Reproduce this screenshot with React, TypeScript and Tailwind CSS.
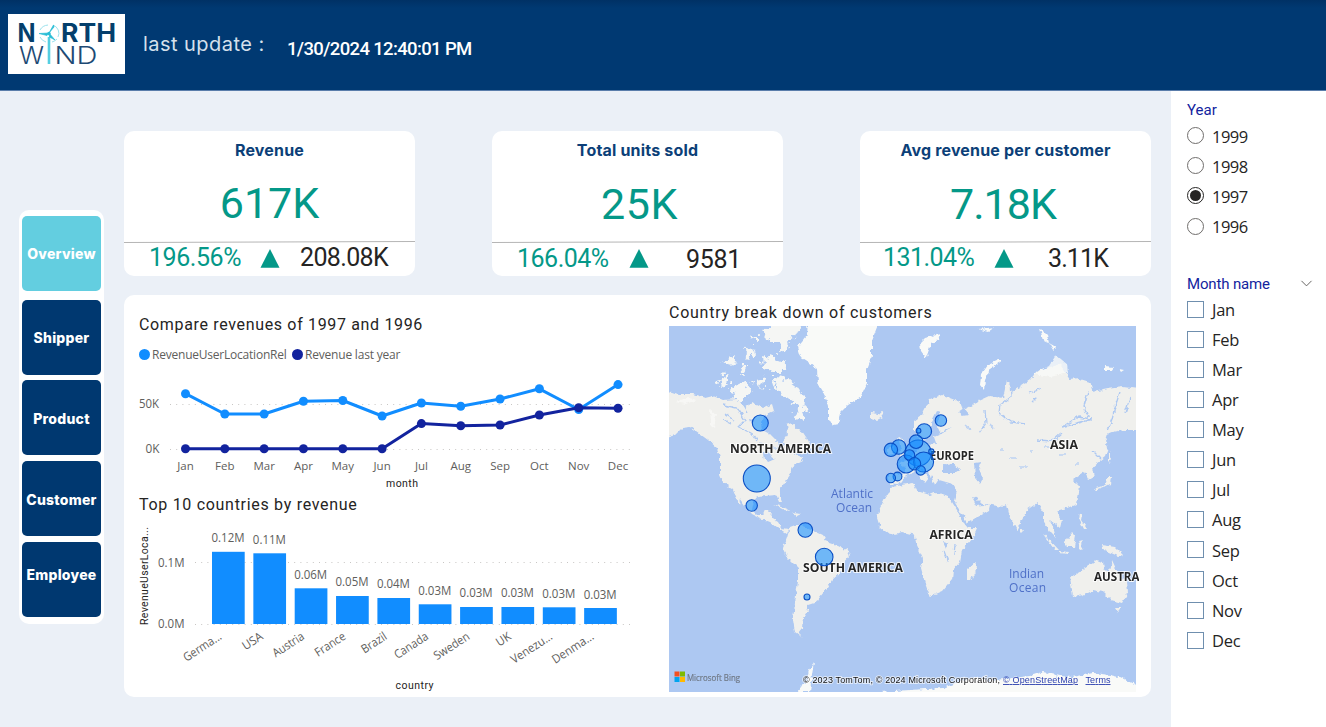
import React from "react";
import { ChevronDown } from "lucide-react";

const months = ["Jan", "Feb", "Mar", "Apr", "May", "Jun", "Jul", "Aug", "Sep", "Oct", "Nov", "Dec"];
const current = [393.7, 414, 414, 401.2, 400.5, 416, 403, 406.2, 399, 388.8, 409.5, 384.6];
const previous = [448.7, 448.7, 448.7, 448.7, 448.7, 448.7, 423.6, 425.8, 425, 415, 407.8, 408.3];
const monthX = (i: number) => 185.5 + i * 39.32;

const bars = [
  { name: "Germa...", value: "0.12M", top: 551.8, w: 43 },
  { name: "USA", value: "0.11M", top: 553.3, w: 22 },
  { name: "Austria", value: "0.06M", top: 588.3, w: 35 },
  { name: "France", value: "0.05M", top: 596, w: 34 },
  { name: "Brazil", value: "0.04M", top: 598, w: 28 },
  { name: "Canada", value: "0.03M", top: 604.3, w: 38 },
  { name: "Sweden", value: "0.03M", top: 607, w: 40 },
  { name: "UK", value: "0.03M", top: 607, w: 15 },
  { name: "Venezu...", value: "0.03M", top: 607.3, w: 47 },
  { name: "Denma...", value: "0.03M", top: 608, w: 47 },
];
const barLabelY = [542, 544, 579, 586, 588, 595, 597, 597, 598, 599];

const bubbles = [
  [760.3, 423, 8], [756.8, 478.5, 13.5], [751.7, 505.5, 5.7], [805.3, 530, 7.3], [824.2, 557, 8.8], [807, 597, 3],
  [940.9, 420.5, 5.7], [924.2, 431.2, 7.4], [918.5, 430.7, 2.4], [918.2, 453, 13], [916.1, 441.7, 6.8],
  [898.7, 447, 7.2], [890.9, 449.8, 6.7], [931.3, 451.5, 2.6], [906.2, 464, 9], [923.6, 462, 10],
  [909.4, 455, 5.3], [914.5, 463.7, 6.2], [920.7, 470.4, 4.7], [897.5, 476.5, 4.4], [890.8, 478, 4.7],
];

function Logo() {
  return (
    <svg width="117" height="60" viewBox="0 0 117 60" className="shrink-0 bg-white">
      <g fontFamily="Inter, sans-serif" fill="#043f6c">
        <text x="9.500" y="28" fontSize="25" fontWeight="700" textLength="18" lengthAdjust="spacingAndGlyphs">N</text>
        <text x="53" y="28" fontSize="25" fontWeight="700" textLength="55" lengthAdjust="spacingAndGlyphs">RTH</text>
        <g fontWeight="300" fontSize="24.500" fill="#1d4a74">
          <text x="11" y="49.500" textLength="25" lengthAdjust="spacingAndGlyphs">W</text>
          <text x="46.500" y="49.500" textLength="43" lengthAdjust="spacingAndGlyphs">ND</text>
        </g>
      </g>
      <path d="M41 23v27" stroke="#55cfe2" strokeWidth="2.600" />
      <path d="M40 11a10 9 0 0 0-8 5M32 23a10 9 0 0 0 6 5M45 11a10 9 0 0 1 5 12M49 25a10 9 0 0 1-5 3" fill="none" stroke="#9be2ed" strokeWidth="1" />
      <path d="M41 19l4.500-8 .5 2zM41 19l-10 .5 8 2zM41 19l6 7-5.500-3z" fill="#28bdd6" stroke="#28bdd6" strokeWidth=".7" />
      <circle cx="41" cy="19.500" r="1.700" fill="#28bdd6" />
    </svg>
  );
}

interface KpiProps {
  title: string;
  value: string;
  percent: string;
  prior: string;
  tone: string;
  pctBox: string;
  priorBox: string;
}

function Kpi({ title, value, percent, prior, tone, pctBox, priorBox }: KpiProps) {
  return (
    <section className="flex h-[145px] w-[291px] flex-col rounded-[10px] bg-white">
      <h2 className="h-[38px] pt-[7px] text-center [font-family:Inter,sans-serif] text-[16px] leading-[24px] font-bold tracking-[0.180px] text-[#0c3f78]">{title}</h2>
      <div className={"h-[72px] text-center [font-family:Roboto,sans-serif] text-[43px] leading-[68px] text-[#049888] " + tone}>{value}</div>
      <svg className="block h-[3px] w-full shrink-0" viewBox="0 0 291 3" preserveAspectRatio="none">
        <path d="M0 1.500L291 .5" stroke="#b5b5b5" strokeWidth="1" />
      </svg>
      <div className="flex h-[32px] [font-family:Roboto,sans-serif] text-[25px] leading-[28px]">
        <div className={"text-[#049888] " + pctBox}>{percent}</div>
        <svg className="mt-[5px] h-[19px] w-[20px]" viewBox="0 0 20 19">
          <path d="M10 0L19.500 18.700H.5z" fill="#049888" />
        </svg>
        <div className={"text-[#252423] " + priorBox}>{prior}</div>
      </div>
    </section>
  );
}

function LineChart() {
  const line = (ys: number[]) => ys.map((y, i) => `${monthX(i)},${y}`).join(" ");
  return (
    <svg width="535" height="126" viewBox="124 366 535 126" className="block" fontFamily="'Open Sans', 'Noto Sans', sans-serif" fontSize="12" fill="#605e5c">
      <path d="M170 404.500H632M170 449.500H632" stroke="#c8c6c4" strokeWidth="1" strokeDasharray="1 5.200" />
      <text x="139" y="408" textLength="20" lengthAdjust="spacingAndGlyphs">50K</text>
      <text x="145.500" y="453" textLength="14" lengthAdjust="spacingAndGlyphs">0K</text>
      <polyline points={line(current)} fill="none" stroke="#118dff" strokeWidth="3" strokeLinejoin="round" />
      {current.map((y, i) => <circle key={i} cx={monthX(i)} cy={y} r="4.500" fill="#118dff" />)}
      <polyline points={line(previous)} fill="none" stroke="#12239e" strokeWidth="3" strokeLinejoin="round" />
      {previous.map((y, i) => <circle key={i} cx={monthX(i)} cy={y} r="4.500" fill="#12239e" />)}
      {months.map((m, i) => <text key={m} x={monthX(i)} y="470" textAnchor="middle" fontSize="11.500">{m}</text>)}
      <text x="386" y="487" textLength="32" fontFamily="Roboto, sans-serif" fontSize="10.500" fill="#252423">month</text>
    </svg>
  );
}

function BarChart() {
  return (
    <svg width="535" height="178" viewBox="124 519 535 178" className="block" fontFamily="'Open Sans', 'Noto Sans', sans-serif" fontSize="12" fill="#605e5c">
      <path d="M195 562.500H632M195 624.500H632" stroke="#c8c6c4" strokeWidth="1" strokeDasharray="1 5.200" />
      <text x="158" y="567" textLength="26.500" lengthAdjust="spacingAndGlyphs">0.1M</text>
      <text x="158" y="628" textLength="26.500" lengthAdjust="spacingAndGlyphs">0.0M</text>
      <text transform="translate(148 625) rotate(-90)" textLength="98" fontFamily="Roboto, sans-serif" fontSize="10.500" fill="#252423">RevenueUserLoca...</text>
      {bars.map((b, i) => {
        const x = 212 + i * 41.35;
        return (
          <g key={b.name}>
            <rect x={x} y={b.top} width="32.700" height={624 - b.top} fill="#118dff" />
            <text x={x - 0.5} y={barLabelY[i]} textLength="33" lengthAdjust="spacingAndGlyphs">{b.value}</text>
            <text transform={`translate(${x + 10.5} ${638.5}) rotate(-33)`} textAnchor="end" textLength={b.w} lengthAdjust="spacingAndGlyphs">{b.name}</text>
          </g>
        );
      })}
      <text x="395.500" y="689" textLength="38" fontFamily="Roboto, sans-serif" fontSize="10.500" fill="#252423">country</text>
    </svg>
  );
}

function WorldMap() {
  return (
    <svg width="470" height="366" viewBox="669 326 470 366" className="block">
      <defs>
        <clipPath id="frame">
          <rect x="669" y="326" width="467" height="366" />
        </clipPath>
        <filter id="coast" x="-5%" y="-5%" width="110%" height="110%">
          <feTurbulence type="fractalNoise" baseFrequency="0.22" numOctaves="2" seed="4" />
          <feDisplacementMap in="SourceGraphic" scale="5" xChannelSelector="R" yChannelSelector="G" />
        </filter>
        <filter id="isles" x="-10%" y="-10%" width="120%" height="120%">
          <feTurbulence type="fractalNoise" baseFrequency="0.16" numOctaves="3" seed="9" />
          <feDisplacementMap in="SourceGraphic" scale="14" xChannelSelector="R" yChannelSelector="G" />
        </filter>
      </defs>
      <g clipPath="url(#frame)">
        <rect x="669" y="326" width="467" height="366" fill="#adc8f2" />
        <g filter="url(#coast)">
          <g fill="#f0f0ed">
            <path d="M660 389L669 391 678 394 693 394 705 398 713 396 723 400 737 399 745 407 753 403 763 408 772 404 774 411 765 415 761 422 762 430 770 434 776 440 780 449 784 446 783 441 788 434 787 425 793 423 797 430 802 431 808 440 812 448 805 453 793 454 803 458 801 462 793 466 790 475 783 485 778 492 782 502 779 502 776 495 765 496 755 498 753 505 752 510 757 515 763 515 765 510 772 511 771 518 778 522 782 529 788 530 787 533 777 527 770 522 760 518 752 514 745 506 739 498 741 506 737 500 733 490 723 482 720 475 720 457 717 448 708 440 697 432 690 427 682 428 675 435 660 440z" />
            <path d="M790 527L798 524 812 530 823 535 828 543 838 546 848 551 850 555 843 563 840 573 832 580 827 588 820 597 817 602 808 605 808 610 803 618 802 628 798 633 803 638 795 632 793 620 795 603 798 580 798 568 788 558 783 548 787 538z" />
            <path d="M892 487L913 483 917 491 930 495 937 492 948 496 952 502 957 510 963 522 968 528 977 528 973 537 962 550 960 562 953 570 952 580 942 592 930 597 925 583 921 568 923 558 916 543 915 535 903 532 890 535 880 527 877 518 880 508 885 498z" />
            <path d="M888 473L890 484 898 485 903 478 910 473 917 472 925 483 929 478 921 469 931 475 935 486 939 480 953 484 957 490 954 501 960 511 967 523 989 510 990 506 982 505 977 506 972 497 976 498 982 504 992 505 1003 507 1007 504 1010 517 1017 531 1022 520 1027 510 1037 503 1043 512 1043 520 1050 532 1056 538 1053 527 1050 520 1060 528 1062 520 1056 511 1067 508 1077 504 1080 487 1073 480 1085 472 1089 480 1094 477 1092 467 1105 457 1108 448 1105 442 1108 433 1123 430 1146 430 1146 390 1123 387 1108 389 1093 392 1090 382 1080 379 1070 380 1060 364 1050 367 1037 371 1030 380 1012 392 1007 380 1003 398 990 396 979 401 963 410 960 402 942 395 930 399 922 415 914 421 914 433 921 441 923 443 914 454 899 464 906 468 904 474z" />
            <path d="M898 436L903 440 907 455 899 458 901 450zM887 448L894 446 893 454 887 455z" />
            <path d="M871 413L878 414 882 412 883 417 877 420 871 418z" />
            <path d="M975 562L977 567 971 580 967 580 967 569zM1043 534L1048 538 1059 550 1055 550zM1059 551L1069 552 1068 554 1059 553zM1064 542L1072 532 1076 536 1074 547 1067 547zM1078 541L1084 540 1081 544 1084 549 1080 550zM1102 545L1115 547 1123 555 1118 556 1104 550zM1079 513L1082 515 1081 520 1087 529 1083 529 1078 519z" />
            <path d="M1070 577L1082 570 1090 565 1098 560 1103 562 1104 569 1109 572 1112 560 1118 573 1127 582 1128 592 1122 603 1111 600 1103 592 1093 590 1083 595 1073 597zM1115 608L1120 608 1118 613z" />
            <path d="M1111 477L1110 484 1103 488 1095 491 1096 488 1105 485 1108 477zM1109 450L1112 459 1109 463zM1021 528L1023 531 1021 533z" />
            <path d="M773 504L785 508 792 511 784 510zM792 513L801 514 797 516z" />
          </g>
          <g fill="#f9faf8">
            <path d="M808 322L807 335 797 347 800 357 808 362 817 370 818 383 825 395 828 405 828 417 833 426 838 425 840 413 848 405 860 398 867 383 867 370 872 357 872 340 879 322z" />
            <path d="M920 343L925 338 940 334 938 340 931 344 926 358 921 351zM1003 360L990 369 985 379 984 390 980 385 981 375 988 365 999 360zM1040 328L1047 335 1049 343 1043 340zM1049 343L1056 347 1053 350zM1105 366L1114 367 1111 371 1105 371zM1119 369L1124 370 1121 372zM978 329L995 327 988 332z" />
            <path d="M1056 355L1067 364 1068 373 1050 377 1033 374 1049 366z" opacity=".8" />
            <path d="M798 692L800 686 806 683 809 670 814 662 812 675 810 692zM880 692L910 690 943 688 962 681 977 677 988 681 1003 679 1030 676 1043 672 1060 676 1073 677 1093 673 1110 675 1123 678 1146 690 1146 700 880 700z" />
            <path d="M676 402L688 397 696 400 686 404zM710 410L716 415 714 430 711 423z" opacity=".7" />
          </g>
          <g fill="#adc8f2">
            <path d="M937 411L940 412 936 424 940 432 952 428 941 434 934 437 936 443 927 444 922 442 931 435 931 423z" />
            <path d="M944 464L950 465 953 462 960 470 955 473 944 473zM974 463L981 462 979 469 983 478 980 484 975 478zM964 408L969 414 962 415 958 412zM943 542L948 543 946 549z" />
            <path d="M749 418L753 419 751 424zM740 412L744 413 742 416zM763 453L772 452 770 457 776 459 769 462 764 460z" />
          </g>
          <g fill="none" stroke="#adc8f2" strokeWidth="1.300">
            <path d="M1010 383L1011 397 1000 405 999 413 1010 422 1025 424M1088 392L1084 406 1089 420 1062 427M1062 427L1078 417 1092 419M1120 392L1115 407 1112 420 1108 430M1130 398L1125 414M1037 440L1053 441 1062 433M1092 450L1101 459M985 410L986 423 979 433M1030 393L1041 389M1032 402L1037 397" />
            <path d="M723 405L737 408 745 420 738 427 751 433 757 442M725 414L735 421M955 545L954 554M944 551L948 562M724 420L732 424M742 402L748 412" />
          </g>
          <path d="M1000 450h3M1010 458h7M1030 451h3M1045 447h8M1060 455h6M1020 467h7M990 424l4 5M965 425l5 4M1075 464h4M773 448h8M760 442l6 2" stroke="#bdd2f2" strokeWidth="1.500" />
        </g>
        <g filter="url(#isles)" fill="#f5f6f4">
          <path d="M763 329L772 322 805 322 800 332 791 337 786 350 779 351 781 341 772 341 766 338z" />
          <path d="M719 377L728 374 730 382 723 389 718 383zM732 386L745 383 751 390 749 399 739 399 731 393zM723 362L734 355 737 362 727 365zM743 349L753 347 758 353 750 357zM762 356L775 358 785 362 783 372 770 372 763 367zM758 379L766 377 763 387zM775 377L786 378 796 387 803 397 807 410 801 420 793 415 799 407 788 397 779 391 773 388zM741 366L749 366 746 371 740 370zM751 338L757 336 757 342zM750 382L755 381 754 388zM739 374l6-1 0 4z" />
        </g>
      </g>
      <g fontFamily="'Open Sans', 'Noto Sans', sans-serif" fontSize="12" fontWeight="700" fill="#252525" stroke="#ffffff" strokeOpacity=".75" strokeWidth="2" paintOrder="stroke">
        <text x="730" y="453" textLength="101" lengthAdjust="spacingAndGlyphs">NORTH AMERICA</text>
        <text x="803" y="572" textLength="100" lengthAdjust="spacingAndGlyphs">SOUTH AMERICA</text>
        <text x="930" y="460" textLength="44" lengthAdjust="spacingAndGlyphs">EUROPE</text>
        <text x="1050" y="449" textLength="28" lengthAdjust="spacingAndGlyphs">ASIA</text>
        <text x="929.500" y="539" textLength="43" lengthAdjust="spacingAndGlyphs">AFRICA</text>
        <text x="1094" y="581" textLength="45.500" lengthAdjust="spacingAndGlyphs">AUSTRA</text>
      </g>
      <g fontFamily="'Open Sans', 'Noto Sans', sans-serif" fontSize="12" fill="#4f70c8">
        <text x="831" y="498" textLength="42">Atlantic</text>
        <text x="836" y="511.500" textLength="36">Ocean</text>
        <text x="1009" y="578" textLength="35">Indian</text>
        <text x="1009" y="592" textLength="37">Ocean</text>
      </g>
      {bubbles.map(([x, y, r], i) => (
        <circle key={i} cx={x} cy={y} r={r} fill="#118dff" fillOpacity=".58" stroke="#0b4fc4" strokeWidth="1.100" />
      ))}
      <path d="M674.500 671.500h5v5h-5z" fill="#f25022" />
      <path d="M680 671.500h5v5h-5z" fill="#7fba00" />
      <path d="M674.500 677h5v5h-5z" fill="#00a4ef" />
      <path d="M680 677h5v5h-5z" fill="#ffb900" />
      <text x="687" y="680.500" textLength="53" lengthAdjust="spacingAndGlyphs" fontFamily="'Open Sans', sans-serif" fontSize="9.500" fill="#6f7885" stroke="#6f7885" strokeWidth=".2">Microsoft Bing</text>
      <g fontFamily="'Liberation Sans', Arial, sans-serif" fontSize="9">
        <g stroke="#ffffff" strokeOpacity=".6" strokeWidth="2" paintOrder="stroke">
          <text x="803" y="683" textLength="197" fill="#111111">© 2023 TomTom, © 2024 Microsoft Corporation,</text>
        </g>
        <text x="1003" y="683" textLength="75" fill="#2b3fae" textDecoration="underline">© OpenStreetMap</text>
        <text x="1085.500" y="683" textLength="25" fill="#2b3fae" textDecoration="underline">Terms</text>
      </g>
    </svg>
  );
}

const nav = [
  { label: "Overview", style: "mb-[9px] bg-[#63cee0] pb-0" },
  { label: "Shipper", style: "mb-[6px] bg-[#003870] pt-px" },
  { label: "Product", style: "mb-[6px] bg-[#003870] pt-px" },
  { label: "Customer", style: "mb-[6px] bg-[#003870] pt-px" },
  { label: "Employee", style: "bg-[#003870] pb-[10px]" },
];

export default function App() {
  return (
    <div className="flex h-[727px] w-[1326px] flex-col overflow-hidden bg-[#ebf0f7]">
      <header className="flex h-[91px] shrink-0 border-b border-[#5a7dab] bg-linear-to-b from-[#003165] to-[#003972] to-[8px] pt-[14px] pl-[8px]">
        <Logo />
        <div className="ml-[18px] w-[144px] pt-[17px] [font-family:Inter,sans-serif] text-[20px] leading-[26px] tracking-[0.450px] whitespace-nowrap text-[#d5e0ec]">last update :</div>
        <div className="pt-[22px] [font-family:Roboto,sans-serif] text-[18.500px] leading-[26px] font-medium tracking-[-0.640px] whitespace-nowrap text-white">1/30/2024 12:40:01 PM</div>
      </header>

      <div className="flex flex-1">
        <div className="flex w-[1171px] shrink-0">
          <nav className="mt-[119px] ml-[19px] flex h-[414px] w-[85px] flex-col rounded-[10px] bg-white px-[3px] pt-[6px]">
            {nav.map((n) => (
              <button key={n.label} className={"-mt-[0.200px] flex h-[75px] w-[79px] shrink-0 items-center justify-center rounded-[5px] [font-family:Inter,sans-serif] text-[14px] font-extrabold tracking-[0.250px] text-white " + n.style}>
                {n.label}
              </button>
            ))}
          </nav>

          <main className="ml-[20px] w-[1027px] pt-[40px]">
            <div className="flex justify-between">
              <Kpi title="Revenue" value="617K" percent="196.56%" prior="208.08K" tone="" pctBox="w-[111px] pl-[25px] mr-[25px] tracking-[-0.450px]" priorBox="ml-[20px] tracking-[-0.650px]" />
              <Kpi title="Total units sold" value="25K" percent="166.04%" prior="9581" tone="pt-[1px] tracking-[0.500px] pl-[4px]" pctBox="w-[111px] pl-[25px] mr-[26px] pt-[1px] tracking-[-0.500px]" priorBox="ml-[37px] pt-[2px] tracking-[-0.300px]" />
              <Kpi title="Avg revenue per customer" value="7.18K" percent="131.04%" prior="3.11K" tone="pt-[1px] tracking-[-1px] pr-[5px]" pctBox="w-[111px] pl-[23px] mr-[23px] tracking-[-0.550px]" priorBox="ml-[34px] pt-[1px] tracking-[-0.900px]" />
            </div>

            <div className="mt-[19px] flex h-[402px] rounded-[10px] bg-white">
              <div className="w-[545px]">
                <h3 className="h-[41px] pt-[18px] pl-[15px] [font-family:Roboto,sans-serif] text-[16px] leading-[24px] tracking-[0.660px] whitespace-nowrap text-[#252423]">Compare revenues of 1997 and 1996</h3>
                <div className="flex h-[30px] items-center pt-[7px] pl-[15px] font-['Open_Sans'] text-[12px] leading-[16px] whitespace-nowrap text-[#605e5c]">
                  <i className="h-[11px] w-[11px] rounded-full bg-[#118dff]" />
                  <span className="ml-[2px] w-[140px] tracking-[-0.220px]">RevenueUserLocationRel</span>
                  <i className="h-[11px] w-[11px] rounded-full bg-[#12239e]" />
                  <span className="ml-[2px] tracking-[-0.200px]">Revenue last year</span>
                </div>
                <LineChart />
                <h3 className="h-[27px] pt-px pl-[15px] [font-family:Roboto,sans-serif] text-[16px] leading-[24px] tracking-[0.700px] whitespace-nowrap text-[#252423]">Top 10 countries by revenue</h3>
                <BarChart />
              </div>
              <div className="w-[470px]">
                <h3 className="h-[31px] pt-[6px] [font-family:Roboto,sans-serif] text-[16px] leading-[24px] tracking-[0.740px] whitespace-nowrap text-[#252423]">Country break down of customers</h3>
                <WorldMap />
              </div>
            </div>
          </main>
        </div>

        <aside className="w-[155px] bg-white pt-[9px] pl-[16px] font-['Open_Sans'] text-[#252423]">
          <h4 className="[font-family:Roboto,sans-serif] text-[15px] leading-[20px] text-[#12239e]">Year</h4>
          <div className="pt-px">
            {["1999", "1998", "1997", "1996"].map((y) => (
              <label key={y} className="flex h-[30.200px] items-center text-[16.500px] tracking-[-0.500px]">
                <span className={"-mt-px flex h-[17px] w-[17px] items-center justify-center rounded-full border " + (y === "1997" ? "border-[#252423]" : "border-[#706e6c]")}>
                  {y === "1997" && <span className="h-[11px] w-[11px] rounded-full bg-[#252423]" />}
                </span>
                <span className="ml-[8px] pt-[2px]">{y}</span>
              </label>
            ))}
          </div>
          <div className="mt-[32px] flex h-[20px] items-center">
            <h4 className="w-[110px] [font-family:Roboto,sans-serif] text-[15px] leading-[20px] tracking-[-0.150px] text-[#12239e]">Month name</h4>
            <ChevronDown size={19} strokeWidth={1.2} color="#605e5c" />
          </div>
          <div className="pt-px">
            {months.map((m) => (
              <label key={m} className="flex h-[30.080px] items-center text-[16.500px] tracking-[-0.300px]">
                <span className="-mt-px h-[17px] w-[17px] border border-[#6f8fae]" />
                <span className="ml-[8px] pt-px">{m}</span>
              </label>
            ))}
          </div>
        </aside>
      </div>
    </div>
  );
}
